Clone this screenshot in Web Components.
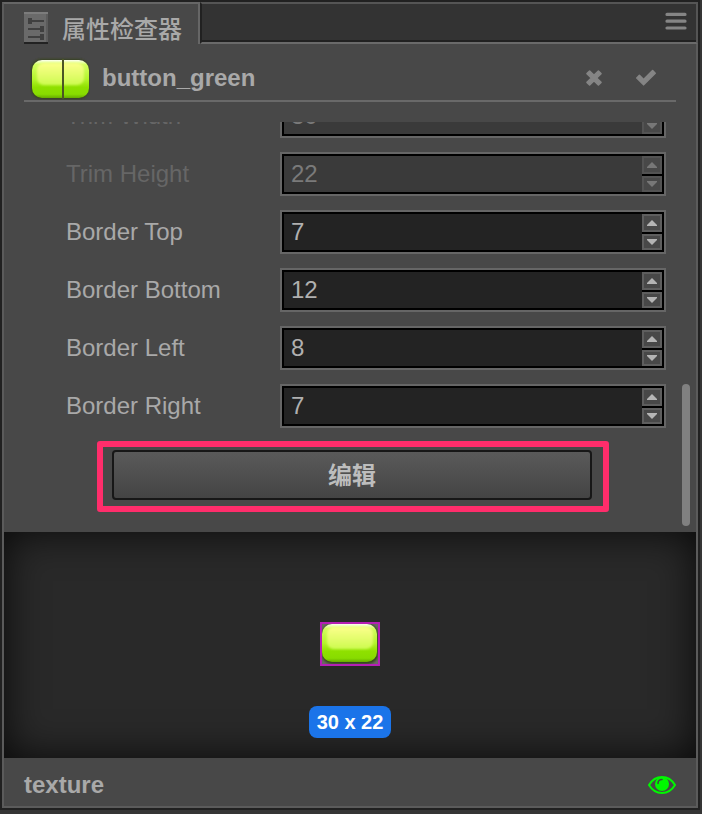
<!DOCTYPE html>
<html lang="zh-CN">
<head>
<meta charset="utf-8">
<meta name="viewport" content="width=device-width, initial-scale=1">
<title>属性检查器</title>
<style>
  html, body { margin: 0; height: 100%; }
  body {
    background: #353535;
    color: #a9a9a9;
    font: 24px/32px "Liberation Sans", "Noto Sans CJK SC", sans-serif;
  }
</style>
</head>
<body>
<inspector-panel>
  <panel-tabs slot="tabs">属性检查器</panel-tabs>
  <asset-header slot="header">button_green</asset-header>
  <number-field label="Trim Width" value="30" disabled></number-field>
  <number-field label="Trim Height" value="22" disabled></number-field>
  <number-field label="Border Top" value="7"></number-field>
  <number-field label="Border Bottom" value="12"></number-field>
  <number-field label="Border Left" value="8"></number-field>
  <number-field label="Border Right" value="7"></number-field>
  <edit-action>编辑</edit-action>
  <texture-preview slot="preview">30 x 22</texture-preview>
  <panel-footer slot="footer">texture</panel-footer>
</inspector-panel>

<script>
  const register = (name, html, setup) => {
    const template = document.createElement('template');
    template.innerHTML = '<style>*{box-sizing:border-box}button{font:inherit;color:inherit;margin:0;padding:0;border:0;background:none}svg{display:block}</style>' + html;
    customElements.define(name, class extends HTMLElement {
      constructor() {
        super();
        this.attachShadow({ mode: 'open' }).append(template.content.cloneNode(true));
      }
      connectedCallback() { if (setup) setup(this, this.shadowRoot); }
    });
  };

  const spriteDefs = `
    <defs>
      <linearGradient id="g" x2="0" y2="1"><stop stop-color="#fdfff0"/><stop offset=".12" stop-color="#d4ff60"/><stop offset=".5" stop-color="#b4f52c"/><stop offset=".72" stop-color="#8fe000"/><stop offset=".9" stop-color="#88dc00"/><stop offset="1" stop-color="#66ac00"/></linearGradient>
      <linearGradient id="h" x2="0" y2="1"><stop stop-color="#fcff8c"/><stop offset="1" stop-color="#cdfb50"/></linearGradient>
      <filter id="s" x="-10%" y="-10%" width="120%" height="120%"><feGaussianBlur stdDeviation=".9"/></filter>
    </defs>`;

  register('inspector-panel', `
    <style>
      :host { display: flex; height: 100vh; box-sizing: border-box; padding: 0 2px 4px 0; }
      .frame { flex: 1; min-width: 0; display: flex; flex-direction: column; border: 2px solid #212121; background: #484848; }
      .inner { flex: 1; min-height: 0; display: flex; flex-direction: column; border: solid #5b5b5b; border-width: 0 2px 2px; }
      .scroll { position: relative; flex: 1; min-height: 0; margin-top: 20px; overflow: hidden; display: flex; flex-direction: column; justify-content: flex-end; gap: 13px; padding-bottom: 20px; }
      .thumb { position: absolute; right: 6px; bottom: 6px; width: 8px; height: 142px; border-radius: 4px; background: #808080; }
    </style>
    <section class="frame">
      <slot name="tabs"></slot>
      <div class="inner">
        <slot name="header"></slot>
        <div class="scroll"><slot></slot><span class="thumb"></span></div>
        <slot name="preview"></slot>
        <slot name="footer"></slot>
      </div>
    </section>`);

  register('panel-tabs', `
    <style>
      :host { display: flex; height: 42px; }
      .tab { display: flex; gap: 14px; align-items: center; padding: 8px 16px 0 20px; border: solid #666; border-width: 2px 2px 0; border-left-color: #5b5b5b; font-weight: 500; }
      .tab svg { flex: none; }
      .title { padding-top: 4px; }
      .rest { flex: 1; display: flex; justify-content: flex-end; align-items: center; padding: 0 9px 4px; border: 2px solid #555; border-left-color: #212121; border-bottom-color: #6a6a6a; background: #333; box-shadow: inset 0 -2px #212121; }
    </style>
    <div class="tab">
      <svg width="24" height="32" viewBox="0 0 24 32" aria-hidden="true">
        <path fill="#6a6a6a" d="M0 0h24v30H0z"/><path fill="#7c7c7c" d="M0 0h24v2H0z"/><path fill="#5c5c5c" d="M22 2h2v28h-2z"/><path fill="#222" d="M0 30h24v2H0z"/>
        <path stroke="#404040" stroke-width="2" d="M5 9h15M4 17h14M4 25h14"/>
        <path fill="#404040" d="M4 6h4v6H4zM16 14h4v6h-4zM16 22h4v6h-4z"/>
      </svg>
      <span class="title"><slot></slot></span>
    </div>
    <div class="rest">
      <button aria-label="菜单"><svg width="22" height="18" viewBox="0 0 22 18"><path stroke="#858585" stroke-width="3.2" stroke-linecap="round" d="M2 2.4h18M2 9.2h18M2 16h18"/></svg></button>
    </div>`);

  register('asset-header', `
    <style>
      :host { display: block; padding: 0 20px; font-weight: bold; }
      header { display: flex; align-items: center; height: 58px; padding: 12px 19px 0 6px; border-bottom: 2px solid #696969; }
      .name { flex: 1; margin: 0 12px; font: inherit; }
      .actions { display: flex; gap: 32px; }
    </style>
    <header>
      <svg width="60" height="44" viewBox="0 0 60 44" aria-hidden="true">
        ${spriteDefs}
        <rect x="1" y="3" width="58" height="40" rx="11" fill="#35421c" filter="url(#s)"/>
        <rect x="2" y="4" width="57" height="38" rx="10" fill="url(#g)"/>
        <rect x="7" y="7" width="47" height="22" rx="7" fill="url(#h)" filter="url(#s)"/>
        <path fill="#4b5525" d="M32 3h2v40h-2z"/>
      </svg>
      <h1 class="name"><slot></slot></h1>
      <div class="actions">
        <button aria-label="取消"><svg width="18" height="18" viewBox="0 0 18 18"><path fill="#858585" stroke="#858585" stroke-width="1.6" stroke-linejoin="round" d="M4.600 2L9 6.400 13.400 2 16 4.600 11.600 9 16 13.400 13.400 16 9 11.600 4.600 16 2 13.400 6.400 9 2 4.600z"/></svg></button>
        <button aria-label="应用"><svg width="22" height="18" viewBox="0 0 22 18"><path fill="#858585" stroke="#858585" stroke-width="1.600" stroke-linejoin="round" d="M1.800 9L4.400 6.400 8.600 10.600 17.600 1.600 20.200 4.200 8.600 15.800z"/></svg></button>
      </div>
    </header>`);

  register('number-field', `
    <style>
      :host { display: block; flex: none; padding: 1px 30px 0 62px; --fill: #232323; --line: #666; --key: #5e5e5e; --arrow: #b4b4b4; }
      :host([disabled]) { color: #666; --fill: #3a3a3a; --key: #535353; --arrow: #777; }
      .row { display: grid; grid-template-columns: 214px minmax(0, 1fr); align-items: center; }
      .field { display: flex; height: 44px; padding: 2px; border: 2px solid var(--line); background: #000; }
      input { flex: 1; min-width: 0; margin: 0; padding: 0 7px; border: 0; border-radius: 0; outline: 0; font: inherit; color: #b0b0b0; background: var(--fill); }
      input:disabled { color: #7a7a7a; }
      .keys { display: grid; grid-template-rows: 18px 16px; gap: 2px; width: 20px; }
      .keys button { display: grid; place-items: center; border: 2px solid var(--key); background: #484848; color: var(--arrow); }
    </style>
    <div class="row">
      <label for="value"></label>
      <div class="field">
        <input id="value" type="text" inputmode="numeric">
        <div class="keys">
          <button aria-label="增加"><svg width="10" height="6" viewBox="0 0 10 6"><path fill="currentColor" d="M5 0l5 5v1H0V5z"/></svg></button>
          <button aria-label="减少"><svg width="10" height="6" viewBox="0 0 10 6"><path fill="currentColor" d="M5 6L0 1V0h10v1z"/></svg></button>
        </div>
      </div>
    </div>`, (host, root) => {
      const input = root.querySelector('input');
      root.querySelector('label').textContent = host.getAttribute('label');
      input.value = host.getAttribute('value');
      const off = host.hasAttribute('disabled');
      input.disabled = off;
      root.querySelectorAll('button').forEach((b, i) => {
        b.disabled = off;
        b.onclick = () => { input.value = Number(input.value) + (i ? -1 : 1); };
      });
    });

  register('edit-action', `
    <style>
      :host { display: block; flex: none; margin: 0 87px 0 93px; padding: 3px 11px 6px 9px; border: 6px solid #ff2d6b; border-radius: 3px; }
      button { display: block; width: 100%; height: 50px; padding-top: 2px; border: 2px solid #171717; border-radius: 4px; background: linear-gradient(#5a5a5a, #444); color: #bdbdbd; font-weight: bold; }
    </style>
    <button><slot></slot></button>`);

  register('texture-preview', `
    <style>
      :host { display: grid; flex: none; position: relative; box-sizing: border-box; height: 226px; padding-bottom: 2px; place-items: center; background: #292929; box-shadow: inset 0 0 40px rgba(0, 0, 0, .8); }
      .size { position: absolute; bottom: 20px; padding: 0 8px; border-radius: 8px; background: #1b74e9; color: #fff; font-size: 20px; font-weight: bold; white-space: nowrap; }
    </style>
    <svg width="60" height="44" viewBox="0 0 60 44" aria-hidden="true">
      ${spriteDefs}
      <path fill="#6a6a62" d="M0 0h60v44H0z"/>
      <rect x="2" y="2" width="56" height="40" rx="10" fill="#35421c" filter="url(#s)"/>
      <rect x="2" y="2" width="55" height="38" rx="10" fill="url(#g)"/>
      <rect x="7" y="5" width="46" height="22" rx="7" fill="url(#h)" filter="url(#s)"/>
      <path fill="none" stroke="#b51fb5" stroke-width="2" d="M1 1h58v42H1z"/>
    </svg>
    <div class="size"><slot></slot></div>`);

  register('panel-footer', `
    <style>
      :host { display: flex; flex: none; align-items: center; justify-content: space-between; box-sizing: border-box; height: 48px; padding: 5px 20px 0; font-weight: bold; }
    </style>
    <span><slot></slot></span>
    <button aria-label="预览"><svg width="28" height="20" viewBox="0 0 28 20">
      <path fill="none" stroke="#00f800" stroke-width="2" d="M1 10C4 5 9 2 14 2s10 3 13 8c-3 5-8 8-13 8S4 15 1 10z"/>
      <circle cx="14" cy="9" r="7" fill="#00f800"/>
      <path fill="none" stroke="#3c4c3c" stroke-width="1.6" stroke-linecap="round" d="M10 8.500c0-2.500 1.500-4 4-4"/>
    </svg></button>`);
</script>
</body>
</html>
